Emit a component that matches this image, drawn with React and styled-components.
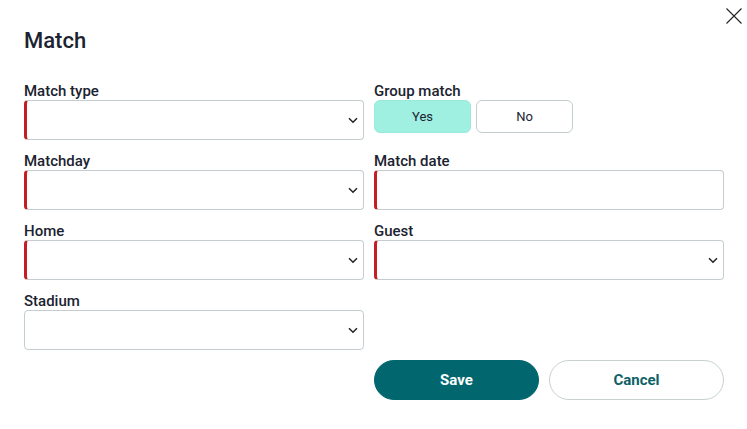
import React from "react";
import styled, { createGlobalStyle } from "styled-components";

const Global = createGlobalStyle`
  html, body { margin: 0; padding: 0; background: #fff; }
  body { font-family: Roboto, "Noto Sans", Arial, sans-serif; color: #1b2330; }
  * { box-sizing: border-box; }
`;

const Dialog = styled.div`
  position: relative;
  width: 747px;
  height: 429px;
  padding: 27px 23px 0 24px;
`;

const Close = styled.button`
  position: absolute;
  top: 8px;
  right: 5px;
  width: 16px;
  height: 16px;
  padding: 0;
  border: 0;
  background: none;
  display: flex;
`;

const Title = styled.h1`
  margin: 0 0 28px;
  font-size: 22px;
  line-height: 28px;
  font-weight: 500;
  color: #1b2330;
`;

const Grid = styled.div`
  display: grid;
  grid-template-columns: 340px 350px;
  column-gap: 10px;
  row-gap: 13px;
`;

const Field = styled.div`
  display: flex;
  flex-direction: column;
`;

const Label = styled.label`
  font-size: 15px;
  line-height: 17px;
  font-weight: 500;
  color: #1b2330;
`;

const Box = styled.div`
  position: relative;
  height: 40px;
  border: 1px solid #c3cccf;
  border-left: ${(p) => (p.$required ? "3px solid #c41e24" : "1px solid #c3cccf")};
  border-radius: 4px;
  background: #fff;
  display: flex;
  align-items: center;
  justify-content: flex-end;
  padding-right: 5px;
`;

const Toggle = styled.div`
  display: flex;
  gap: 5px;
`;

const ToggleBtn = styled.button`
  width: 97px;
  height: 33px;
  border: 1px solid ${(p) => (p.$active ? "#98e9dc" : "#c3cccf")};
  background: ${(p) => (p.$active ? "#9ff0e1" : "#fff")};
  border-radius: 6px;
  font-family: inherit;
  font-size: 13px;
  color: #1b2330;
  padding: 0;
`;

const Actions = styled.div`
  grid-column: 2;
  display: flex;
  gap: 10px;
  margin-top: -3px;
`;

const Btn = styled.button`
  height: 40px;
  width: ${(p) => p.$w}px;
  border-radius: 20px;
  font-family: inherit;
  font-size: 15px;
  font-weight: 700;
  border: 1px solid ${(p) => (p.$primary ? "#02666f" : "#c8d0d2")};
  background: ${(p) => (p.$primary ? "#02666f" : "#fff")};
  color: ${(p) => (p.$primary ? "#fff" : "#0d5f68")};
`;

const Chevron = () => (
  <svg width="10" height="7" viewBox="0 0 10 7">
    <path d="M1 1.2 L5 5.2 L9 1.2" fill="none" stroke="#222" strokeWidth="1.5" />
  </svg>
);

const Select = ({ required }) => (
  <Box $required={required}>
    <Chevron />
  </Box>
);

export default function App() {
  return (
    <>
      <Global />
      <Dialog>
        <Close aria-label="close">
          <svg width="16" height="16" viewBox="0 0 16 16">
            <path d="M0.5 0.5 L15.5 15.5 M15.5 0.5 L0.5 15.5" stroke="#222" strokeWidth="1.1" />
          </svg>
        </Close>
        <Title>Match</Title>
        <Grid>
          <Field>
            <Label>Match type</Label>
            <Select required />
          </Field>
          <Field>
            <Label>Group match</Label>
            <Toggle>
              <ToggleBtn $active>Yes</ToggleBtn>
              <ToggleBtn>No</ToggleBtn>
            </Toggle>
          </Field>
          <Field>
            <Label>Matchday</Label>
            <Select required />
          </Field>
          <Field>
            <Label>Match date</Label>
            <Box $required />
          </Field>
          <Field>
            <Label>Home</Label>
            <Select required />
          </Field>
          <Field>
            <Label>Guest</Label>
            <Select required />
          </Field>
          <Field>
            <Label>Stadium</Label>
            <Select />
          </Field>
          <div />
          <Actions>
            <Btn $primary $w={165}>Save</Btn>
            <Btn $w={175}>Cancel</Btn>
          </Actions>
        </Grid>
      </Dialog>
    </>
  );
}
